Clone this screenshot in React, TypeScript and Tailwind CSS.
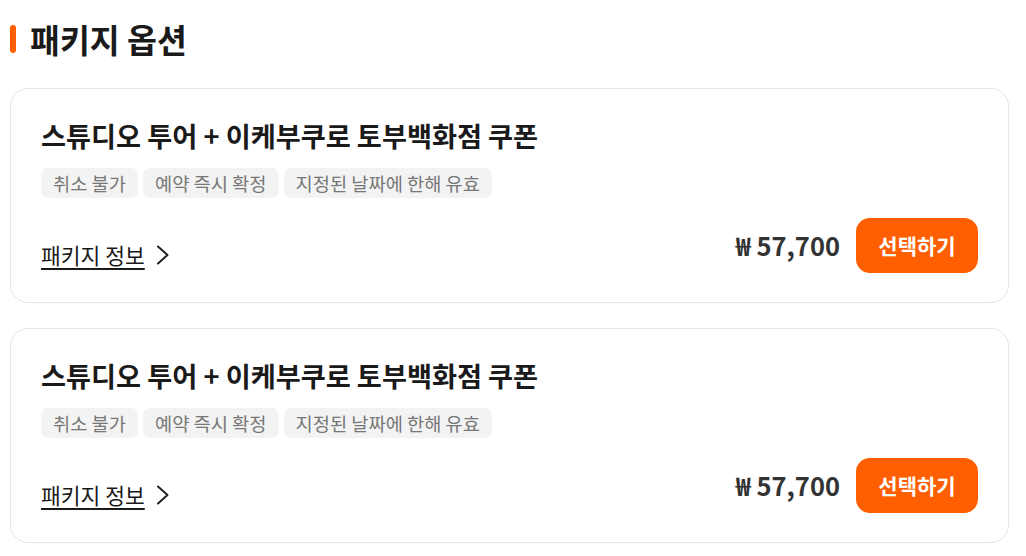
import React from "react";

// Package options list
const tags: string[] = ["취소 불가", "예약 즉시 확정", "지정된 날짜에 한해 유효"];

const PackageCard: React.FC = () => {
  return (
    <div className="rounded-[18px] border border-[#e5e5e5] bg-white px-[30px] pt-[28px] pb-[29px]">
      <h3 className="text-[27.2px] font-bold leading-[36px] text-[#1a1a1a]">
        스튜디오 투어 + 이케부쿠로 토부백화점 쿠폰
      </h3>
      <div className="mt-[15px] flex gap-[5px]">
        {tags.map((t) => (
          <span
            key={t}
            className="flex h-[30px] items-center rounded-[7px] bg-[#f3f3f3] px-[12px] text-[18.7px] leading-none text-[#777]"
          >
            {t}
          </span>
        ))}
      </div>
      <div className="mt-[20px] flex items-center justify-between">
        <button className="mt-[18px] flex items-center gap-[11px] text-[21.5px] leading-[28px] text-[#1a1a1a]">
          <span className="underline decoration-[2px] underline-offset-[4px]">패키지 정보</span>
          <svg width="14" height="20" viewBox="0 0 14 20" fill="none">
            <path d="M2 1.5l9.5 8.5L2 18.5" stroke="#222" strokeWidth="2" strokeLinecap="round" strokeLinejoin="round" />
          </svg>
        </button>
        <div className="flex items-center gap-[16px]">
          <span className="text-[25.5px] font-bold text-[#333]">₩ 57,700</span>
          <button className="flex h-[55px] w-[122px] items-center justify-center rounded-[14px] bg-[#ff5f00] text-[21px] font-bold text-white">
            선택하기
          </button>
        </div>
      </div>
    </div>
  );
};

const App: React.FC = () => {
  return (
    <div
      className="min-h-screen bg-white pl-[10px] pr-[17px] pt-[18px]"
      style={{ fontFamily: '"Noto Sans CJK KR", "Noto Sans", sans-serif' }}
    >
      <div className="flex items-center gap-[14px]">
        <div className="h-[28px] w-[6px] rounded-full bg-[#ff5f00]" />
        <h2 className="text-[32.5px] font-bold leading-[42px] text-[#1a1a1a]">패키지 옵션</h2>
      </div>
      <div className="mt-[28px] flex flex-col gap-[25px]">
        <PackageCard />
        <PackageCard />
      </div>
    </div>
  );
};

export default App;
